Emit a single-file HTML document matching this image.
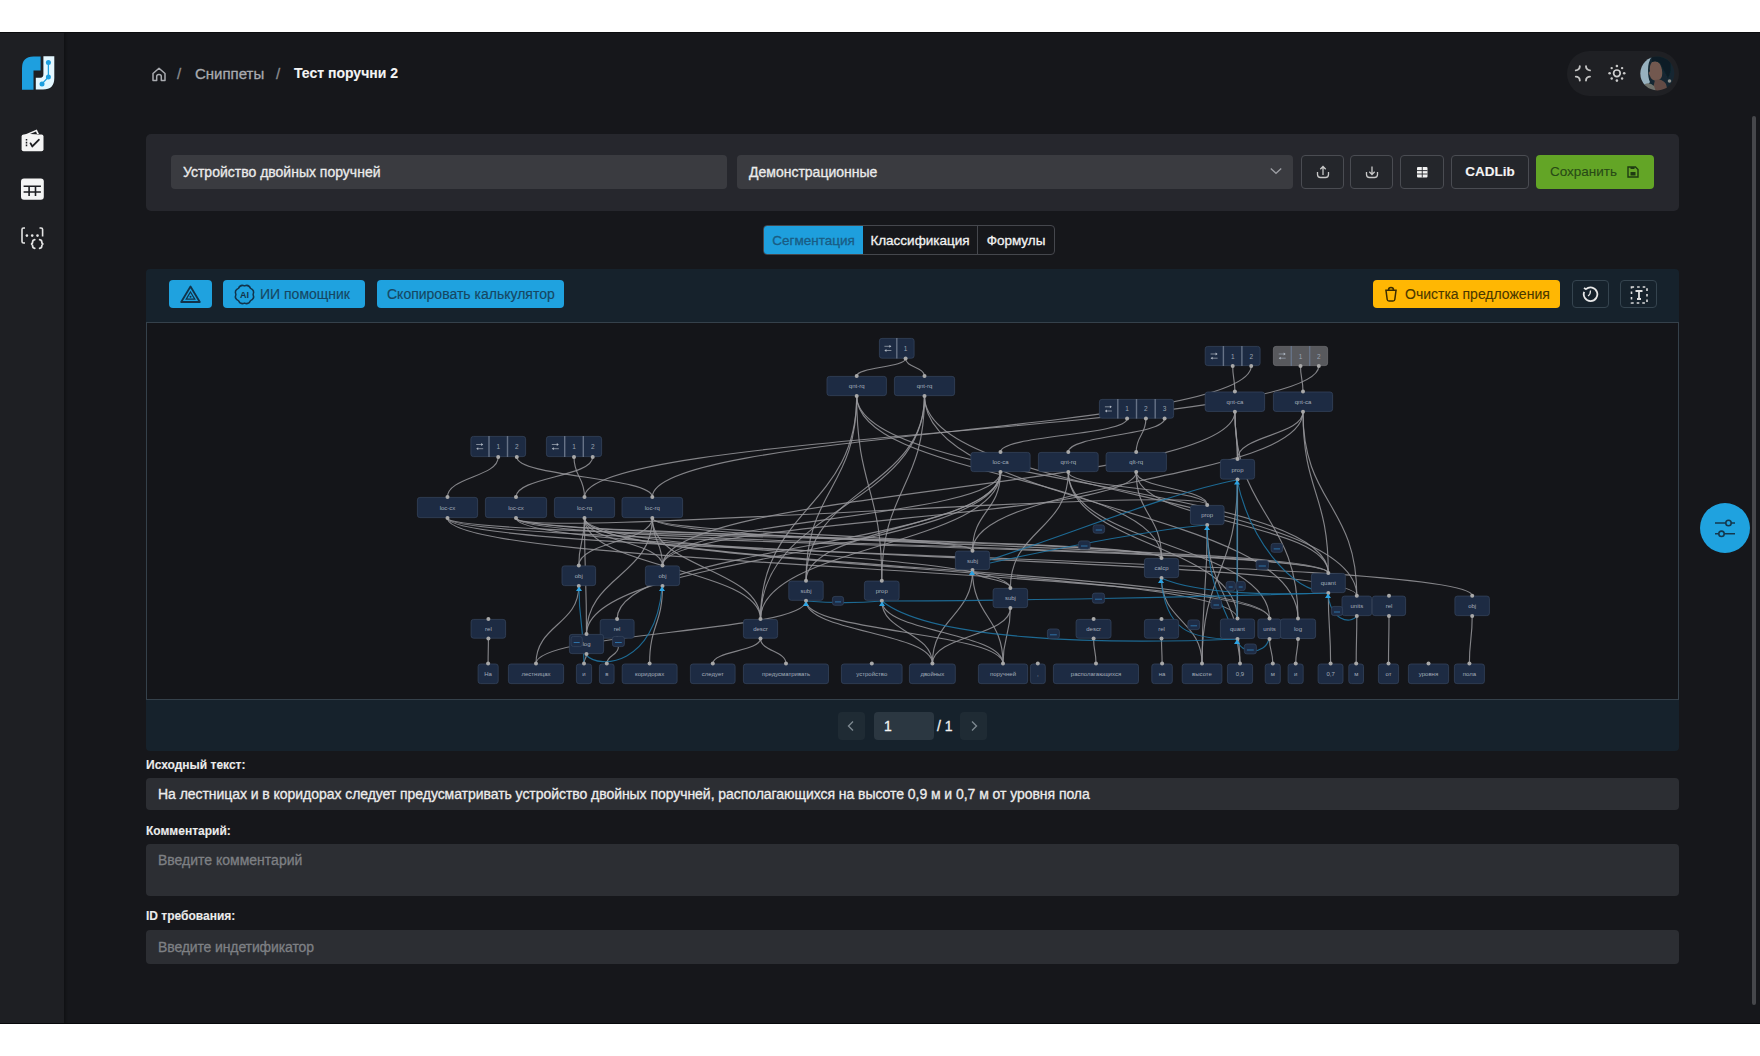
<!DOCTYPE html>
<html><head><meta charset="utf-8">
<style>
*{box-sizing:border-box;margin:0;padding:0}
html,body{width:1760px;height:1056px;overflow:hidden;background:#fff;font-family:"Liberation Sans",sans-serif;color:#e6e6e6}
.abs{position:absolute}
#app div{-webkit-text-stroke:0.3px currentColor}
#app div[style*="bold"],#app .lbl{-webkit-text-stroke:0.1px currentColor}
svg{display:block}
#app{position:absolute;left:0;top:32px;width:1760px;height:992px;background:#16171b;overflow:hidden}
#side{position:absolute;left:0;top:0;width:64px;height:992px;background:#1e1f23;box-shadow:2px 0 2px rgba(0,0,0,0.25)}
.card{position:absolute;left:146px;top:102px;width:1533px;height:77px;background:#26272d;border-radius:5px}
.inp{position:absolute;background:#3a3b40;border-radius:4px;font-size:14px;color:#ebebeb;line-height:34px;padding-left:12px}
.obtn{position:absolute;top:21px;height:34px;border:1px solid #4a4c52;border-radius:4px;background:#24262b}
.tabs{position:absolute;left:763px;top:193px;height:30px;width:292px;border:1px solid #45474d;border-radius:4px;background:#16171b;font-size:13.5px}
.tab{position:absolute;top:0;height:28px;line-height:29px;text-align:center;color:#f2f2f2}
.panel{position:absolute;left:146px;top:237px;width:1533px;height:482px;background:#16222c;border-radius:4px}
.canvas{position:absolute;left:0px;top:53px;width:1533px;height:378px;background:#141519;border:1px solid #35414b}
.bbtn{position:absolute;top:11px;height:28px;background:#1fa2df;border-radius:4px;color:#164763;font-size:14px;line-height:28px}
#app .bbtn{-webkit-text-stroke:0.15px currentColor}
.lbl{position:absolute;left:146px;font-size:12px;font-weight:bold;color:#ebebeb}
.fld{position:absolute;left:146px;width:1533px;background:#2c2e33;border-radius:4px;font-size:14px;padding-left:12px}
</style></head><body>
<div id="app">
  <div id="side">
    <!-- logo -->
    <svg class="abs" style="left:0;top:-32px" width="65" height="300" viewBox="0 0 65 300">
      <path d="M22,89.8 V68 Q22,56.4 33.5,56.4 H40.6 V70.4 H33.5 V89.8 Z" fill="#1e9fdf"/>
      <path d="M43.4,56.2 H54.3 V78 Q54.3,89.5 43,89.5 H35.8 V77.8 H40.5 Q43.4,77.8 43.4,74 Z" fill="#e4f7ff"/>
      <path d="M48.4,62.5 V77 L42,83.9" stroke="#1e9fdf" stroke-width="1.3" fill="none"/>
      <circle cx="48.4" cy="62.5" r="2.5" fill="#1e9fdf"/><circle cx="48.4" cy="77" r="2.5" fill="#1e9fdf"/><circle cx="42" cy="83.9" r="2.5" fill="#1e9fdf"/>
      <!-- icon1 -->
      <path d="M21.6,136 L36.8,129.5 L39,134 Z" fill="#f4f4f4"/>
      <rect x="21.6" y="134.6" width="21.9" height="16.6" rx="2" fill="#f4f4f4"/>
      <path d="M30,134 L36,131.5 L37,134 Z" fill="#1c1d21"/>
      <path d="M26.5,139 V147.5" stroke="#1c1d21" stroke-width="1.5" stroke-dasharray="1.6 1.2"/>
      <path d="M30.6,143.4 L32.3,146.4 L38.8,139.8" stroke="#1c1d21" stroke-width="1.9" fill="none" stroke-linecap="round" stroke-linejoin="round"/>
      <!-- icon2 -->
      <rect x="21" y="178.6" width="22.8" height="21.2" rx="3" fill="#f4f4f4"/>
      <path d="M23.6,186.3 H40.9 M23.6,192 H40.9 M29.1,186.3 V196 M35.5,186.3 V196" stroke="#1c1d21" stroke-width="1.6" fill="none"/>
      <!-- icon3 -->
      <path d="M25,228 H23.5 Q22,228 22,229.5 V241.5 Q22,243 23.5,243 H25" stroke="#e4e4e4" stroke-width="1.6" fill="none"/>
      <path d="M39.5,228 H41 Q42.6,228 42.6,229.5 V236.5" stroke="#e4e4e4" stroke-width="1.6" fill="none"/>
      <circle cx="26.9" cy="235.6" r="1.3" fill="#e4e4e4"/><circle cx="32.2" cy="235.6" r="1.3" fill="#e4e4e4"/><circle cx="37.5" cy="235.6" r="1.3" fill="#e4e4e4"/>
      <path d="M34.8,239.6 Q32.6,240 32.6,242 Q32.6,243.9 30.9,244 Q32.6,244.1 32.6,246 Q32.6,248 34.8,248.4 M39.6,239.6 Q41.8,240 41.8,242 Q41.8,243.9 43.5,244 Q41.8,244.1 41.8,246 Q41.8,248 39.6,248.4" stroke="#e4e4e4" stroke-width="1.7" fill="none" stroke-linecap="round"/>
    </svg>
  </div>
  <!-- breadcrumb -->
  <svg class="abs" style="left:150px;top:33px" width="18" height="18" viewBox="0 0 18 18">
    <path d="M3,15.5 V8.5 L9,3.2 L15,8.5 V15.5 H11.3 V11.5 Q11.3,9.6 9,9.6 Q6.7,9.6 6.7,11.5 V15.5 Z" stroke="#a9abb0" stroke-width="1.5" fill="none" stroke-linejoin="round"/>
  </svg>
  <div class="abs" style="left:177px;top:33px;font-size:15px;color:#8a8c90">/</div>
  <div class="abs" style="left:195px;top:33px;font-size:15px;color:#a9abb0">Сниппеты</div>
  <div class="abs" style="left:276px;top:33px;font-size:15px;color:#8a8c90">/</div>
  <div class="abs" style="left:294px;top:33px;font-size:14px;font-weight:bold;color:#f4f4f4">Тест поручни 2</div>

  <!-- header pill -->
  <div class="abs" style="left:1567px;top:19px;width:112px;height:45px;border-radius:23px;background:#1f2024"></div>
  <svg class="abs" style="left:1567px;top:19px" width="112" height="45" viewBox="1567 51 112 45">
    <g stroke="#c4c4c4" stroke-width="1.9" fill="none" stroke-linecap="round">
      <path d="M1575.8,70.4 A4,4 0 0 0 1579.8,66.3"/><path d="M1586,66.3 A4,4 0 0 0 1590,70.4"/>
      <path d="M1575.8,76.6 A4,4 0 0 1 1579.8,80.6"/><path d="M1586,80.6 A4,4 0 0 1 1590,76.6"/>
    </g>
    <circle cx="1616.9" cy="73.3" r="3.3" stroke="#cfcfcf" stroke-width="1.7" fill="none"/>
    <g fill="#c8c8c8">
      <circle cx="1616.9" cy="66" r="1.3"/><circle cx="1616.9" cy="80.6" r="1.3"/><circle cx="1609.6" cy="73.3" r="1.3"/><circle cx="1624.2" cy="73.3" r="1.3"/>
      <circle cx="1611.7" cy="68.1" r="1.2"/><circle cx="1622.1" cy="68.1" r="1.2"/><circle cx="1611.7" cy="78.5" r="1.2"/><circle cx="1622.1" cy="78.5" r="1.2"/>
    </g>
    <defs>
      <clipPath id="av"><circle cx="1657.3" cy="73.4" r="17"/></clipPath>
      <filter id="avb" x="-0.2" y="-0.2" width="1.4" height="1.4"><feGaussianBlur stdDeviation="0.7"/></filter>
      <radialGradient id="face" cx="0.45" cy="0.5" r="0.5"><stop offset="0" stop-color="#8a7365"/><stop offset="1" stop-color="#4a3f3a"/></radialGradient>
    </defs>
    <g clip-path="url(#av)"><g filter="url(#avb)">
      <rect x="1640" y="56" width="36" height="36" fill="#122731"/>
      <path d="M1640,92 V56 H1652 Q1648,62 1648,70 Q1648,78 1650,82 L1644,90 Z" fill="#97b1bf"/>
      <path d="M1652,62 Q1657,60 1660,64 Q1663,70 1662,76 Q1661,80 1656,81 Q1651,80 1650,76 L1648.5,73 L1650,71 Q1649,66 1652,62 Z" fill="#72584f"/>
      <path d="M1655,80 Q1662,78 1666,84 L1668,92 H1652 Z" fill="#644c45"/>
      <path d="M1640,92 L1645,84 Q1650,82 1654,86 L1656,92 Z" fill="#6f736d"/>
      <circle cx="1669.5" cy="81" r="1.8" fill="#8d8f8c"/>
      <path d="M1652,57 Q1662,55 1670,62 Q1672,70 1668,78 Q1664,70 1660,63 Q1656,60 1652,62 Z" fill="#0f1f27"/>
    </g></g>
  </svg>

  <!-- top card -->
  <div class="card">
    <div class="inp" style="left:25px;top:21px;width:556px;height:34px">Устройство двойных поручней</div>
    <div class="inp" style="left:591px;top:21px;width:556px;height:34px">Демонстрационные</div>
    <svg class="abs" style="left:1124px;top:33px" width="12" height="8" viewBox="0 0 12 8"><path d="M0.8,1.5 L6,6.3 L11.2,1.5" stroke="#9c9ea3" stroke-width="1.3" fill="none"/></svg>
    <div class="obtn" style="left:1155px;width:43px"><svg class="abs" style="left:13px;top:9px" width="16" height="14" viewBox="0 0 16 14"><path d="M2.5,7 V9.5 Q2.5,12.5 5.5,12.5 H10.5 Q13.5,12.5 13.5,9.5 V7" stroke="#c8c8c8" stroke-width="1.3" fill="none"/><path d="M8,10 V1.5 M5.3,4.2 L8,1.5 L10.7,4.2" stroke="#c8c8c8" stroke-width="1.3" fill="none"/></svg></div>
    <div class="obtn" style="left:1204px;width:43px"><svg class="abs" style="left:13px;top:9px" width="16" height="14" viewBox="0 0 16 14"><path d="M2.5,7 V9.5 Q2.5,12.5 5.5,12.5 H10.5 Q13.5,12.5 13.5,9.5 V7" stroke="#c8c8c8" stroke-width="1.3" fill="none"/><path d="M8,1.5 V9.5 M5.3,6.8 L8,9.5 L10.7,6.8" stroke="#c8c8c8" stroke-width="1.3" fill="none"/></svg></div>
    <div class="obtn" style="left:1254px;width:44px"><svg class="abs" style="left:16px;top:11px" width="11" height="11" viewBox="0 0 11 11"><rect x="0" y="0" width="10.5" height="10.5" rx="1" fill="#f2f2f2"/><path d="M0,3.6 H10.5 M0,7 H10.5 M5.25,0 V10.5" stroke="#24262b" stroke-width="0.9"/></svg></div>
    <div class="obtn" style="left:1305px;width:78px;font-weight:bold;font-size:13.5px;line-height:32px;text-align:center;color:#f4f4f4">CADLib</div>
    <div class="abs" style="left:1390px;top:21px;width:118px;height:34px;background:#63a526;border-radius:4px;color:#284a16;font-size:13.5px;line-height:34px;padding-left:14px;-webkit-text-stroke:0.1px currentColor">Сохранить</div>
    <svg class="abs" style="left:1481px;top:32px" width="12" height="12" viewBox="0 0 12 12"><path d="M1,1 H8.5 L11,3.5 V11 H1 Z" stroke="#1f3b12" stroke-width="1.4" fill="none"/><rect x="3.5" y="6" width="5" height="3.5" fill="#1f3b12"/><rect x="3.5" y="1" width="4" height="2" fill="#1f3b12"/></svg>
  </div>

  <!-- tabs -->
  <div class="tabs">
    <div class="tab" style="left:0;width:99px;background:#1e9fdd;color:#195c84;border-radius:3px 0 0 3px">Сегментация</div>
    <div class="tab" style="left:99px;width:115px;border-right:1px solid #45474d">Классификация</div>
    <div class="tab" style="left:214px;width:76px">Формулы</div>
  </div>

  <!-- graph panel -->
  <div class="panel">
    <div class="bbtn" style="left:23px;width:43px"><svg class="abs" style="left:11px;top:5px" width="21" height="19" viewBox="0 0 21 19"><path d="M10.5,1.5 L19.8,17 H1.2 Z" stroke="#12334a" stroke-width="1.8" fill="none" stroke-linejoin="round"/><path d="M10.5,7 L14.8,14.2 H6.2 Z" stroke="#12334a" stroke-width="1.2" fill="none"/><circle cx="10.5" cy="11.8" r="1" fill="#12334a"/></svg></div>
    <div class="bbtn" style="left:77px;width:142px;padding-left:37px">ИИ помощник<svg class="abs" style="left:10px;top:3px" width="23" height="23" viewBox="0 0 23 23"><path d="M20.10,11.50 Q21.85,15.79 17.58,17.58 Q15.79,21.85 11.50,20.10 Q7.21,21.85 5.42,17.58 Q1.15,15.79 2.90,11.50 Q1.15,7.21 5.42,5.42 Q7.21,1.15 11.50,2.90 Q15.79,1.15 17.58,5.42 Q21.85,7.21 20.10,11.50 Z" stroke="#12334a" stroke-width="1.5" fill="none" stroke-linejoin="round"/><text x="11.5" y="15" font-size="9" font-weight="bold" text-anchor="middle" fill="#12334a" font-family="Liberation Sans">AI</text></svg></div>
    <div class="bbtn" style="left:231px;width:187px;padding-left:10px">Скопировать калькулятор</div>
    <div class="abs" style="left:1227px;top:11px;width:187px;height:28px;background:#ffb703;border-radius:4px;color:#4a3800;font-size:14px;line-height:28px;padding-left:32px;-webkit-text-stroke:0.1px currentColor">Очистка предложения
      <svg class="abs" style="left:11px;top:6px" width="14" height="16" viewBox="0 0 14 16"><path d="M2,4.5 L3.2,13.5 Q3.4,15 5,15 H9 Q10.6,15 10.8,13.5 L12,4.5 M1.2,4.2 H12.8 M4.5,4 Q4.5,1.5 7,1.5 Q9.5,1.5 9.5,4" stroke="#3a2c00" stroke-width="1.5" fill="none"/></svg></div>
    <div class="abs" style="left:1426px;top:11px;width:37px;height:28px;border:1px solid #35444f;border-radius:4px">
      <svg class="abs" style="left:7.5px;top:4px" width="18" height="18" viewBox="0 0 18 18"><path d="M5,4.2 A6.8,6.8 0 1 1 3.2,6.8" stroke="#e8e8e8" stroke-width="1.8" fill="none"/><path d="M3,3 L5.5,4.5" stroke="#e8e8e8" stroke-width="1.8"/><path d="M9.5,5.5 Q9.5,9.5 7,11" stroke="#e8e8e8" stroke-width="1.2" fill="none"/></svg></div>
    <div class="abs" style="left:1474px;top:11px;width:37px;height:28px;border:1px solid #35444f;border-radius:4px">
      <svg class="abs" style="left:9px;top:4px" width="18" height="19" viewBox="0 0 18 19"><rect x="1.5" y="2" width="15.5" height="16" stroke="#dcdcdc" stroke-width="1.6" fill="none" stroke-dasharray="2.6 3"/><path d="M5.5,6 H12.5 M9,6 V14 M7,14 H11" stroke="#e0e0e0" stroke-width="1.8" fill="none"/></svg></div>
    <div class="canvas"></div>
    <!-- pagination -->
    <div class="abs" style="left:692px;top:443px;width:27px;height:28px;border-radius:4px;background:#1f2b34"><svg class="abs" style="left:8px;top:8px" width="10" height="12" viewBox="0 0 10 12"><path d="M7,1.5 L2.5,6 L7,10.5" stroke="#7d8890" stroke-width="1.4" fill="none"/></svg></div>
    <div class="abs" style="left:728px;top:443px;width:60px;height:28px;border-radius:4px;background:#2b3741;font-size:14px;color:#f4f4f4;line-height:28px;padding-left:10px">1</div>
    <div class="abs" style="left:791px;top:443px;font-size:14px;color:#f0f0f0;line-height:28px">/ 1</div>
    <div class="abs" style="left:814px;top:443px;width:27px;height:28px;border-radius:4px;background:#1f2b34"><svg class="abs" style="left:9px;top:8px" width="10" height="12" viewBox="0 0 10 12"><path d="M3,1.5 L7.5,6 L3,10.5" stroke="#7d8890" stroke-width="1.4" fill="none"/></svg></div>
  </div>

  <!-- bottom fields -->
  <div class="lbl" style="top:726px">Исходный текст:</div>
  <div class="fld" style="top:746px;height:32px;line-height:32px;color:#ececec;letter-spacing:-0.05px">На лестницах и в коридорах следует предусматривать устройство двойных поручней, располагающихся на высоте 0,9 м и 0,7 м от уровня пола</div>
  <div class="lbl" style="top:792px">Комментарий:</div>
  <div class="fld" style="top:812px;height:52px;padding-top:8px;color:#7e8084">Введите комментарий</div>
  <div class="lbl" style="top:877px">ID требования:</div>
  <div class="fld" style="top:898px;height:34px;line-height:34px;color:#7e8084;letter-spacing:-0.12px">Введите индетификатор</div>

<!--GRAPH--><svg width="1760" height="1056" viewBox="0 0 1760 1056" style="position:absolute;left:0;top:-32px" font-family="Liberation Sans">
<path d="M905.6,358.6 C905.6,367.3 856.7,367.3 856.7,376.0" fill="none" stroke="#96979b" stroke-width="1.15" stroke-opacity="0.85"/>
<path d="M905.6,358.6 C905.6,367.3 924.5,367.3 924.5,376.0" fill="none" stroke="#96979b" stroke-width="1.15" stroke-opacity="0.85"/>
<path d="M498.2,457.0 C498.2,477.0 447.5,477.0 447.5,497.0" fill="none" stroke="#96979b" stroke-width="1.15" stroke-opacity="0.85"/>
<path d="M516.8,457.0 C516.8,477.0 652.3,477.0 652.3,497.0" fill="none" stroke="#96979b" stroke-width="1.15" stroke-opacity="0.85"/>
<path d="M574.0,457.0 C574.0,477.0 584.5,477.0 584.5,497.0" fill="none" stroke="#96979b" stroke-width="1.15" stroke-opacity="0.85"/>
<path d="M592.7,457.0 C592.7,477.0 516.0,477.0 516.0,497.0" fill="none" stroke="#96979b" stroke-width="1.15" stroke-opacity="0.85"/>
<path d="M1127.1,418.6 C1127.1,435.3 1000.5,435.3 1000.5,452.0" fill="none" stroke="#96979b" stroke-width="1.15" stroke-opacity="0.85"/>
<path d="M1145.9,418.6 C1145.9,435.3 1136.2,435.3 1136.2,452.0" fill="none" stroke="#96979b" stroke-width="1.15" stroke-opacity="0.85"/>
<path d="M1164.6,418.6 C1164.6,435.3 1068.3,435.3 1068.3,452.0" fill="none" stroke="#96979b" stroke-width="1.15" stroke-opacity="0.85"/>
<path d="M1232.7,366.0 C1232.7,378.8 1234.9,378.8 1234.9,391.6" fill="none" stroke="#96979b" stroke-width="1.15" stroke-opacity="0.85"/>
<path d="M1251.2,366.0 C1251.2,431.5 652.3,431.5 652.3,497.0" fill="none" stroke="#96979b" stroke-width="1.15" stroke-opacity="0.85"/>
<path d="M1300.5,366.0 C1300.5,378.8 1303.0,378.8 1303.0,391.6" fill="none" stroke="#96979b" stroke-width="1.15" stroke-opacity="0.85"/>
<path d="M1318.8,366.0 C1318.8,431.5 584.5,431.5 584.5,497.0" fill="none" stroke="#96979b" stroke-width="1.15" stroke-opacity="0.85"/>
<path d="M447.5,518.0 C447.5,538.0 1161.5,538.0 1161.5,558.0" fill="none" stroke="#96979b" stroke-width="1.15" stroke-opacity="0.85"/>
<path d="M447.5,518.0 C447.5,545.5 1328.3,545.5 1328.3,573.0" fill="none" stroke="#96979b" stroke-width="1.15" stroke-opacity="0.85"/>
<path d="M447.5,518.0 C447.5,556.9 1472.2,556.9 1472.2,595.7" fill="none" stroke="#96979b" stroke-width="1.15" stroke-opacity="0.85"/>
<path d="M447.5,518.0 C447.5,568.3 1269.5,568.3 1269.5,618.6" fill="none" stroke="#96979b" stroke-width="1.15" stroke-opacity="0.85"/>
<path d="M516.0,518.0 C516.0,534.4 972.5,534.4 972.5,550.7" fill="none" stroke="#96979b" stroke-width="1.15" stroke-opacity="0.85"/>
<path d="M516.0,518.0 C516.0,538.0 1161.5,538.0 1161.5,558.0" fill="none" stroke="#96979b" stroke-width="1.15" stroke-opacity="0.85"/>
<path d="M516.0,518.0 C516.0,545.5 1328.3,545.5 1328.3,573.0" fill="none" stroke="#96979b" stroke-width="1.15" stroke-opacity="0.85"/>
<path d="M516.0,518.0 C516.0,556.9 1356.8,556.9 1356.8,595.7" fill="none" stroke="#96979b" stroke-width="1.15" stroke-opacity="0.85"/>
<path d="M516.0,518.0 C516.0,540.5 1207.2,482.5 1207.2,505.0" fill="none" stroke="#96979b" stroke-width="1.15" stroke-opacity="0.85"/>
<path d="M584.5,518.0 C584.5,541.8 578.8,541.8 578.8,565.5" fill="none" stroke="#96979b" stroke-width="1.15" stroke-opacity="0.85"/>
<path d="M584.5,518.0 C584.5,576.0 586.5,576.0 586.5,634.0" fill="none" stroke="#96979b" stroke-width="1.15" stroke-opacity="0.85"/>
<path d="M584.5,518.0 C584.5,553.0 1010.4,553.0 1010.4,588.0" fill="none" stroke="#96979b" stroke-width="1.15" stroke-opacity="0.85"/>
<path d="M584.5,518.0 C584.5,568.3 1237.5,568.3 1237.5,618.6" fill="none" stroke="#96979b" stroke-width="1.15" stroke-opacity="0.85"/>
<path d="M584.5,518.0 C584.5,568.3 1269.5,568.3 1269.5,618.6" fill="none" stroke="#96979b" stroke-width="1.15" stroke-opacity="0.85"/>
<path d="M584.5,518.0 C584.5,541.8 662.5,541.8 662.5,565.5" fill="none" stroke="#96979b" stroke-width="1.15" stroke-opacity="0.85"/>
<path d="M584.5,518.0 C584.5,568.5 760.5,568.5 760.5,619.0" fill="none" stroke="#96979b" stroke-width="1.15" stroke-opacity="0.85"/>
<path d="M652.3,518.0 C652.3,541.8 662.5,541.8 662.5,565.5" fill="none" stroke="#96979b" stroke-width="1.15" stroke-opacity="0.85"/>
<path d="M652.3,518.0 C652.3,576.0 586.5,576.0 586.5,634.0" fill="none" stroke="#96979b" stroke-width="1.15" stroke-opacity="0.85"/>
<path d="M652.3,518.0 C652.3,541.8 578.8,541.8 578.8,565.5" fill="none" stroke="#96979b" stroke-width="1.15" stroke-opacity="0.85"/>
<path d="M652.3,518.0 C652.3,534.4 972.5,534.4 972.5,550.7" fill="none" stroke="#96979b" stroke-width="1.15" stroke-opacity="0.85"/>
<path d="M652.3,518.0 C652.3,545.5 1328.3,545.5 1328.3,573.0" fill="none" stroke="#96979b" stroke-width="1.15" stroke-opacity="0.85"/>
<path d="M652.3,518.0 C652.3,568.5 760.5,568.5 760.5,619.0" fill="none" stroke="#96979b" stroke-width="1.15" stroke-opacity="0.85"/>
<path d="M856.7,396.0 C856.7,488.4 806.0,488.4 806.0,580.7" fill="none" stroke="#96979b" stroke-width="1.15" stroke-opacity="0.85"/>
<path d="M856.7,396.0 C856.7,488.4 881.8,488.4 881.8,580.7" fill="none" stroke="#96979b" stroke-width="1.15" stroke-opacity="0.85"/>
<path d="M856.7,396.0 C856.7,507.5 760.5,507.5 760.5,619.0" fill="none" stroke="#96979b" stroke-width="1.15" stroke-opacity="0.85"/>
<path d="M856.7,396.0 C856.7,477.0 1161.5,477.0 1161.5,558.0" fill="none" stroke="#96979b" stroke-width="1.15" stroke-opacity="0.85"/>
<path d="M856.7,396.0 C856.7,484.5 1328.3,484.5 1328.3,573.0" fill="none" stroke="#96979b" stroke-width="1.15" stroke-opacity="0.85"/>
<path d="M924.5,396.0 C924.5,488.4 881.8,488.4 881.8,580.7" fill="none" stroke="#96979b" stroke-width="1.15" stroke-opacity="0.85"/>
<path d="M924.5,396.0 C924.5,507.5 760.5,507.5 760.5,619.0" fill="none" stroke="#96979b" stroke-width="1.15" stroke-opacity="0.85"/>
<path d="M924.5,396.0 C924.5,488.4 806.0,488.4 806.0,580.7" fill="none" stroke="#96979b" stroke-width="1.15" stroke-opacity="0.85"/>
<path d="M924.5,396.0 C924.5,507.3 1298.0,507.3 1298.0,618.6" fill="none" stroke="#96979b" stroke-width="1.15" stroke-opacity="0.85"/>
<path d="M924.5,396.0 C924.5,495.9 1356.8,495.9 1356.8,595.7" fill="none" stroke="#96979b" stroke-width="1.15" stroke-opacity="0.85"/>
<path d="M1000.5,472.0 C1000.5,526.4 806.0,526.4 806.0,580.7" fill="none" stroke="#96979b" stroke-width="1.15" stroke-opacity="0.85"/>
<path d="M1000.5,472.0 C1000.5,545.5 760.5,545.5 760.5,619.0" fill="none" stroke="#96979b" stroke-width="1.15" stroke-opacity="0.85"/>
<path d="M1000.5,472.0 C1000.5,511.4 972.5,511.4 972.5,550.7" fill="none" stroke="#96979b" stroke-width="1.15" stroke-opacity="0.85"/>
<path d="M1000.5,472.0 C1000.5,518.8 662.5,518.8 662.5,565.5" fill="none" stroke="#96979b" stroke-width="1.15" stroke-opacity="0.85"/>
<path d="M1000.5,472.0 C1000.5,553.0 586.5,553.0 586.5,634.0" fill="none" stroke="#96979b" stroke-width="1.15" stroke-opacity="0.85"/>
<path d="M1000.5,472.0 C1000.5,545.5 617.1,545.5 617.1,619.0" fill="none" stroke="#96979b" stroke-width="1.15" stroke-opacity="0.85"/>
<path d="M1068.3,472.0 C1068.3,530.0 1010.4,530.0 1010.4,588.0" fill="none" stroke="#96979b" stroke-width="1.15" stroke-opacity="0.85"/>
<path d="M1068.3,472.0 C1068.3,488.5 1207.2,488.5 1207.2,505.0" fill="none" stroke="#96979b" stroke-width="1.15" stroke-opacity="0.85"/>
<path d="M1068.3,472.0 C1068.3,545.3 1237.5,545.3 1237.5,618.6" fill="none" stroke="#96979b" stroke-width="1.15" stroke-opacity="0.85"/>
<path d="M1068.3,472.0 C1068.3,545.3 1269.5,545.3 1269.5,618.6" fill="none" stroke="#96979b" stroke-width="1.15" stroke-opacity="0.85"/>
<path d="M1136.2,472.0 C1136.2,488.5 1207.2,488.5 1207.2,505.0" fill="none" stroke="#96979b" stroke-width="1.15" stroke-opacity="0.85"/>
<path d="M1136.2,472.0 C1136.2,515.0 1161.5,515.0 1161.5,558.0" fill="none" stroke="#96979b" stroke-width="1.15" stroke-opacity="0.85"/>
<path d="M1136.2,472.0 C1136.2,518.8 662.5,518.8 662.5,565.5" fill="none" stroke="#96979b" stroke-width="1.15" stroke-opacity="0.85"/>
<path d="M1136.2,472.0 C1136.2,522.5 1328.3,522.5 1328.3,573.0" fill="none" stroke="#96979b" stroke-width="1.15" stroke-opacity="0.85"/>
<path d="M1234.9,411.8 C1234.9,435.4 1237.5,435.4 1237.5,459.0" fill="none" stroke="#96979b" stroke-width="1.15" stroke-opacity="0.85"/>
<path d="M1234.9,411.8 C1234.9,488.6 662.5,488.6 662.5,565.5" fill="none" stroke="#96979b" stroke-width="1.15" stroke-opacity="0.85"/>
<path d="M1234.9,411.8 C1234.9,515.2 1298.0,515.2 1298.0,618.6" fill="none" stroke="#96979b" stroke-width="1.15" stroke-opacity="0.85"/>
<path d="M1234.9,411.8 C1234.9,435.4 1237.5,435.4 1237.5,459.0" fill="none" stroke="#96979b" stroke-width="1.15" stroke-opacity="0.85"/>
<path d="M1303.0,411.8 C1303.0,435.4 1237.5,435.4 1237.5,459.0" fill="none" stroke="#96979b" stroke-width="1.15" stroke-opacity="0.85"/>
<path d="M1303.0,411.8 C1303.0,492.4 1328.3,492.4 1328.3,573.0" fill="none" stroke="#96979b" stroke-width="1.15" stroke-opacity="0.85"/>
<path d="M1303.0,411.8 C1303.0,503.8 1356.8,503.8 1356.8,595.7" fill="none" stroke="#96979b" stroke-width="1.15" stroke-opacity="0.85"/>
<path d="M1303.0,411.8 C1303.0,481.2 972.5,481.2 972.5,550.7" fill="none" stroke="#96979b" stroke-width="1.15" stroke-opacity="0.85"/>
<path d="M1237.5,479.5 C1237.5,549.0 1237.5,549.0 1237.5,618.6" fill="none" stroke="#96979b" stroke-width="1.15" stroke-opacity="0.85"/>
<path d="M1237.5,479.5 C1237.5,571.5 1202.0,571.5 1202.0,663.6" fill="none" stroke="#96979b" stroke-width="1.15" stroke-opacity="0.85"/>
<path d="M1207.2,525.0 C1207.2,594.3 1202.0,594.3 1202.0,663.6" fill="none" stroke="#96979b" stroke-width="1.15" stroke-opacity="0.85"/>
<path d="M1207.2,525.0 C1207.2,594.3 1240.0,594.3 1240.0,663.6" fill="none" stroke="#96979b" stroke-width="1.15" stroke-opacity="0.85"/>
<path d="M972.5,570.0 C972.5,579.0 1010.4,579.0 1010.4,588.0" fill="none" stroke="#96979b" stroke-width="1.15" stroke-opacity="0.85"/>
<path d="M972.5,570.0 C972.5,616.8 1003.0,616.8 1003.0,663.6" fill="none" stroke="#96979b" stroke-width="1.15" stroke-opacity="0.85"/>
<path d="M972.5,570.0 C972.5,616.8 932.4,616.8 932.4,663.6" fill="none" stroke="#96979b" stroke-width="1.15" stroke-opacity="0.85"/>
<path d="M806.0,600.7 C806.0,632.2 932.4,632.2 932.4,663.6" fill="none" stroke="#96979b" stroke-width="1.15" stroke-opacity="0.85"/>
<path d="M806.0,600.7 C806.0,632.2 536.0,632.2 536.0,663.6" fill="none" stroke="#96979b" stroke-width="1.15" stroke-opacity="0.85"/>
<path d="M806.0,600.7 C806.0,632.2 1003.0,632.2 1003.0,663.6" fill="none" stroke="#96979b" stroke-width="1.15" stroke-opacity="0.85"/>
<path d="M881.8,600.7 C881.8,632.2 932.4,632.2 932.4,663.6" fill="none" stroke="#96979b" stroke-width="1.15" stroke-opacity="0.85"/>
<path d="M881.8,600.7 C881.8,632.2 1003.0,632.2 1003.0,663.6" fill="none" stroke="#96979b" stroke-width="1.15" stroke-opacity="0.85"/>
<path d="M1010.4,608.0 C1010.4,635.8 1003.0,635.8 1003.0,663.6" fill="none" stroke="#96979b" stroke-width="1.15" stroke-opacity="0.85"/>
<path d="M1010.4,608.0 C1010.4,635.8 932.4,635.8 932.4,663.6" fill="none" stroke="#96979b" stroke-width="1.15" stroke-opacity="0.85"/>
<path d="M760.5,638.6 C760.5,651.1 712.8,651.1 712.8,663.6" fill="none" stroke="#96979b" stroke-width="1.15" stroke-opacity="0.85"/>
<path d="M760.5,638.6 C760.5,651.1 786.0,651.1 786.0,663.6" fill="none" stroke="#96979b" stroke-width="1.15" stroke-opacity="0.85"/>
<path d="M1093.6,638.6 C1093.6,651.1 1096.0,651.1 1096.0,663.6" fill="none" stroke="#96979b" stroke-width="1.15" stroke-opacity="0.85"/>
<path d="M1161.5,638.6 C1161.5,651.1 1162.1,651.1 1162.1,663.6" fill="none" stroke="#96979b" stroke-width="1.15" stroke-opacity="0.85"/>
<path d="M1161.5,578.0 C1161.5,620.8 1202.0,620.8 1202.0,663.6" fill="none" stroke="#96979b" stroke-width="1.15" stroke-opacity="0.85"/>
<path d="M1328.3,593.0 C1328.3,628.3 1330.6,628.3 1330.6,663.6" fill="none" stroke="#96979b" stroke-width="1.15" stroke-opacity="0.85"/>
<path d="M1237.5,638.9 C1237.5,651.2 1240.0,651.2 1240.0,663.6" fill="none" stroke="#96979b" stroke-width="1.15" stroke-opacity="0.85"/>
<path d="M1356.8,616.0 C1356.8,639.8 1356.2,639.8 1356.2,663.6" fill="none" stroke="#96979b" stroke-width="1.15" stroke-opacity="0.85"/>
<path d="M1269.5,638.9 C1269.5,651.2 1272.8,651.2 1272.8,663.6" fill="none" stroke="#96979b" stroke-width="1.15" stroke-opacity="0.85"/>
<path d="M1298.0,638.9 C1298.0,651.2 1295.7,651.2 1295.7,663.6" fill="none" stroke="#96979b" stroke-width="1.15" stroke-opacity="0.85"/>
<path d="M1389.0,616.0 C1389.0,639.8 1388.5,639.8 1388.5,663.6" fill="none" stroke="#96979b" stroke-width="1.15" stroke-opacity="0.85"/>
<path d="M1472.2,616.0 C1472.2,639.8 1469.4,639.8 1469.4,663.6" fill="none" stroke="#96979b" stroke-width="1.15" stroke-opacity="0.85"/>
<path d="M488.4,638.6 C488.4,651.1 488.1,651.1 488.1,663.6" fill="none" stroke="#96979b" stroke-width="1.15" stroke-opacity="0.85"/>
<path d="M578.8,586.0 C578.8,624.8 536.0,624.8 536.0,663.6" fill="none" stroke="#96979b" stroke-width="1.15" stroke-opacity="0.85"/>
<path d="M662.5,586.0 C662.5,624.8 649.6,624.8 649.6,663.6" fill="none" stroke="#96979b" stroke-width="1.15" stroke-opacity="0.85"/>
<path d="M586.5,654.0 C586.5,658.8 584.0,658.8 584.0,663.6" fill="none" stroke="#96979b" stroke-width="1.15" stroke-opacity="0.85"/>
<path d="M618.4,647.0 C618.4,655.3 606.8,655.3 606.8,663.6" fill="none" stroke="#96979b" stroke-width="1.15" stroke-opacity="0.85"/>
<path d="M579,588 C579,625 584,625 584,664" fill="none" stroke="#1e78a8" stroke-width="1.15" stroke-opacity="0.85"/>
<path d="M586,655 C600,670 655,665 662,588" fill="none" stroke="#1e78a8" stroke-width="1.15" stroke-opacity="0.85"/>
<path d="M806,601 C830,603 860,603 882,601" fill="none" stroke="#1e78a8" stroke-width="1.15" stroke-opacity="0.85"/>
<path d="M882,601 C1000,601 1200,597 1328,593" fill="none" stroke="#1e78a8" stroke-width="1.15" stroke-opacity="0.85"/>
<path d="M882,601 C930,640 1100,645 1237,639" fill="none" stroke="#1e78a8" stroke-width="1.15" stroke-opacity="0.85"/>
<path d="M990,563 C1050,550 1150,530 1207,525" fill="none" stroke="#1e78a8" stroke-width="1.15" stroke-opacity="0.85"/>
<path d="M990,560 C1080,530 1180,490 1237,480" fill="none" stroke="#1e78a8" stroke-width="1.15" stroke-opacity="0.85"/>
<path d="M1237,480 L1237,619" fill="none" stroke="#1e78a8" stroke-width="1.15" stroke-opacity="0.85"/>
<path d="M1207,525 C1207,580 1220,600 1237,639" fill="none" stroke="#1e78a8" stroke-width="1.15" stroke-opacity="0.85"/>
<path d="M1161,578 C1165,630 1190,640 1237,639" fill="none" stroke="#1e78a8" stroke-width="1.15" stroke-opacity="0.85"/>
<path d="M1161,578 C1200,595 1280,595 1328,593" fill="none" stroke="#1e78a8" stroke-width="1.15" stroke-opacity="0.85"/>
<path d="M1237,480 C1250,540 1290,590 1328,593" fill="none" stroke="#1e78a8" stroke-width="1.15" stroke-opacity="0.85"/>
<path d="M1328,593 C1330,620 1350,625 1357,616" fill="none" stroke="#1e78a8" stroke-width="1.15" stroke-opacity="0.85"/>
<path d="M1237,639 C1240,655 1265,655 1269,639" fill="none" stroke="#1e78a8" stroke-width="1.15" stroke-opacity="0.85"/>
<rect x="879.4" y="338.4" width="34.7" height="19.8" rx="2.5" fill="#1d2b43" stroke="#33425b" stroke-width="0.8"/>
<line x1="896.8" y1="338.0" x2="896.8" y2="358.6" stroke="#667286" stroke-width="1.4"/>
<text x="905.6" y="350.8" font-size="6.5" fill="#9aa3b0" text-anchor="middle">1</text>
<path d="M884.4,346.3 h6 M891.4,350.5 h-6" stroke="#8c95a2" stroke-width="0.9"/><path d="M891.4,346.3 l-2,-1.4 v2.8 z M884.4,350.5 l2,-1.4 v2.8 z" fill="#b0b8c4"/>
<circle cx="905.6" cy="358.6" r="2" fill="#a8a8a8"/>
<rect x="470.9" y="436.4" width="54.7" height="20.2" rx="2.5" fill="#1d2b43" stroke="#33425b" stroke-width="0.8"/>
<line x1="489.0" y1="436.0" x2="489.0" y2="457.0" stroke="#667286" stroke-width="1.4"/>
<line x1="507.5" y1="436.0" x2="507.5" y2="457.0" stroke="#667286" stroke-width="1.4"/>
<text x="498.2" y="449.0" font-size="6.5" fill="#9aa3b0" text-anchor="middle">1</text>
<text x="516.8" y="449.0" font-size="6.5" fill="#9aa3b0" text-anchor="middle">2</text>
<path d="M476.2,444.5 h6 M483.2,448.7 h-6" stroke="#8c95a2" stroke-width="0.9"/><path d="M483.2,444.5 l-2,-1.4 v2.8 z M476.2,448.7 l2,-1.4 v2.8 z" fill="#b0b8c4"/>
<circle cx="498.2" cy="457.0" r="2" fill="#a8a8a8"/>
<circle cx="516.8" cy="457.0" r="2" fill="#a8a8a8"/>
<rect x="546.4" y="436.4" width="55.2" height="20.2" rx="2.5" fill="#1d2b43" stroke="#33425b" stroke-width="0.8"/>
<line x1="564.7" y1="436.0" x2="564.7" y2="457.0" stroke="#667286" stroke-width="1.4"/>
<line x1="583.3" y1="436.0" x2="583.3" y2="457.0" stroke="#667286" stroke-width="1.4"/>
<text x="574.0" y="449.0" font-size="6.5" fill="#9aa3b0" text-anchor="middle">1</text>
<text x="592.7" y="449.0" font-size="6.5" fill="#9aa3b0" text-anchor="middle">2</text>
<path d="M551.8,444.5 h6 M558.8,448.7 h-6" stroke="#8c95a2" stroke-width="0.9"/><path d="M558.8,444.5 l-2,-1.4 v2.8 z M551.8,448.7 l2,-1.4 v2.8 z" fill="#b0b8c4"/>
<circle cx="574.0" cy="457.0" r="2" fill="#a8a8a8"/>
<circle cx="592.7" cy="457.0" r="2" fill="#a8a8a8"/>
<rect x="1099.4" y="399.4" width="74.2" height="18.8" rx="2.5" fill="#1d2b43" stroke="#33425b" stroke-width="0.8"/>
<line x1="1117.8" y1="399.0" x2="1117.8" y2="418.6" stroke="#667286" stroke-width="1.4"/>
<line x1="1136.5" y1="399.0" x2="1136.5" y2="418.6" stroke="#667286" stroke-width="1.4"/>
<line x1="1155.2" y1="399.0" x2="1155.2" y2="418.6" stroke="#667286" stroke-width="1.4"/>
<text x="1127.1" y="411.3" font-size="6.5" fill="#9aa3b0" text-anchor="middle">1</text>
<text x="1145.9" y="411.3" font-size="6.5" fill="#9aa3b0" text-anchor="middle">2</text>
<text x="1164.6" y="411.3" font-size="6.5" fill="#9aa3b0" text-anchor="middle">3</text>
<path d="M1104.9,406.8 h6 M1111.9,411.0 h-6" stroke="#8c95a2" stroke-width="0.9"/><path d="M1111.9,406.8 l-2,-1.4 v2.8 z M1104.9,411.0 l2,-1.4 v2.8 z" fill="#b0b8c4"/>
<circle cx="1127.1" cy="418.6" r="2" fill="#a8a8a8"/>
<circle cx="1145.9" cy="418.6" r="2" fill="#a8a8a8"/>
<circle cx="1164.6" cy="418.6" r="2" fill="#a8a8a8"/>
<rect x="1205.2" y="346.4" width="54.9" height="19.2" rx="2.5" fill="#1d2b43" stroke="#33425b" stroke-width="0.8"/>
<line x1="1223.4" y1="346.0" x2="1223.4" y2="366.0" stroke="#667286" stroke-width="1.4"/>
<line x1="1241.9" y1="346.0" x2="1241.9" y2="366.0" stroke="#667286" stroke-width="1.4"/>
<text x="1232.7" y="358.5" font-size="6.5" fill="#9aa3b0" text-anchor="middle">1</text>
<text x="1251.2" y="358.5" font-size="6.5" fill="#9aa3b0" text-anchor="middle">2</text>
<path d="M1210.6,354.0 h6 M1217.6,358.2 h-6" stroke="#8c95a2" stroke-width="0.9"/><path d="M1217.6,354.0 l-2,-1.4 v2.8 z M1210.6,358.2 l2,-1.4 v2.8 z" fill="#b0b8c4"/>
<circle cx="1232.7" cy="366.0" r="2" fill="#a8a8a8"/>
<circle cx="1251.2" cy="366.0" r="2" fill="#a8a8a8"/>
<rect x="1273.4" y="346.4" width="54.2" height="19.2" rx="2.5" fill="#58595d" stroke="#6b6c70" stroke-width="0.8"/>
<line x1="1291.3" y1="346.0" x2="1291.3" y2="366.0" stroke="#667286" stroke-width="1.4"/>
<line x1="1309.7" y1="346.0" x2="1309.7" y2="366.0" stroke="#667286" stroke-width="1.4"/>
<text x="1300.5" y="358.5" font-size="6.5" fill="#9aa3b0" text-anchor="middle">1</text>
<text x="1318.8" y="358.5" font-size="6.5" fill="#9aa3b0" text-anchor="middle">2</text>
<path d="M1278.7,354.0 h6 M1285.7,358.2 h-6" stroke="#8c95a2" stroke-width="0.9"/><path d="M1285.7,354.0 l-2,-1.4 v2.8 z M1278.7,358.2 l2,-1.4 v2.8 z" fill="#b0b8c4"/>
<circle cx="1300.5" cy="366.0" r="2" fill="#a8a8a8"/>
<circle cx="1318.8" cy="366.0" r="2" fill="#a8a8a8"/>
<rect x="827.0" y="376.4" width="59.4" height="19.2" rx="2.5" fill="#1d2b43" stroke="#33425b" stroke-width="0.8"/>
<text x="856.7" y="388.3" font-size="6" fill="#a3acba" text-anchor="middle">qnt-rq</text>
<circle cx="856.7" cy="376.0" r="2" fill="#a8a8a8"/>
<circle cx="856.7" cy="396.0" r="2" fill="#a8a8a8"/>
<rect x="894.4" y="376.4" width="60.2" height="19.2" rx="2.5" fill="#1d2b43" stroke="#33425b" stroke-width="0.8"/>
<text x="924.5" y="388.3" font-size="6" fill="#a3acba" text-anchor="middle">qnt-rq</text>
<circle cx="924.5" cy="376.0" r="2" fill="#a8a8a8"/>
<circle cx="924.5" cy="396.0" r="2" fill="#a8a8a8"/>
<rect x="1205.2" y="392.0" width="59.4" height="19.4" rx="2.5" fill="#1d2b43" stroke="#33425b" stroke-width="0.8"/>
<text x="1234.9" y="404.0" font-size="6" fill="#a3acba" text-anchor="middle">qnt-ca</text>
<circle cx="1234.9" cy="391.6" r="2" fill="#a8a8a8"/>
<circle cx="1234.9" cy="411.8" r="2" fill="#a8a8a8"/>
<rect x="1273.4" y="392.0" width="59.2" height="19.4" rx="2.5" fill="#1d2b43" stroke="#33425b" stroke-width="0.8"/>
<text x="1303.0" y="404.0" font-size="6" fill="#a3acba" text-anchor="middle">qnt-ca</text>
<circle cx="1303.0" cy="391.6" r="2" fill="#a8a8a8"/>
<circle cx="1303.0" cy="411.8" r="2" fill="#a8a8a8"/>
<rect x="970.9" y="452.4" width="59.2" height="19.2" rx="2.5" fill="#1d2b43" stroke="#33425b" stroke-width="0.8"/>
<text x="1000.5" y="464.3" font-size="6" fill="#a3acba" text-anchor="middle">loc-ca</text>
<circle cx="1000.5" cy="452.0" r="2" fill="#a8a8a8"/>
<circle cx="1000.5" cy="472.0" r="2" fill="#a8a8a8"/>
<rect x="1038.4" y="452.4" width="59.8" height="19.2" rx="2.5" fill="#1d2b43" stroke="#33425b" stroke-width="0.8"/>
<text x="1068.3" y="464.3" font-size="6" fill="#a3acba" text-anchor="middle">qnt-rq</text>
<circle cx="1068.3" cy="452.0" r="2" fill="#a8a8a8"/>
<circle cx="1068.3" cy="472.0" r="2" fill="#a8a8a8"/>
<rect x="1106.1" y="452.4" width="60.3" height="19.2" rx="2.5" fill="#1d2b43" stroke="#33425b" stroke-width="0.8"/>
<text x="1136.2" y="464.3" font-size="6" fill="#a3acba" text-anchor="middle">qlt-rq</text>
<circle cx="1136.2" cy="452.0" r="2" fill="#a8a8a8"/>
<circle cx="1136.2" cy="472.0" r="2" fill="#a8a8a8"/>
<rect x="1220.4" y="459.4" width="34.2" height="19.7" rx="2.5" fill="#1d2b43" stroke="#33425b" stroke-width="0.8"/>
<text x="1237.5" y="471.6" font-size="6" fill="#a3acba" text-anchor="middle">prop</text>
<circle cx="1237.5" cy="459.0" r="2" fill="#a8a8a8"/>
<circle cx="1237.5" cy="479.5" r="2" fill="#a8a8a8"/>
<rect x="417.4" y="497.4" width="60.2" height="20.2" rx="2.5" fill="#1d2b43" stroke="#33425b" stroke-width="0.8"/>
<text x="447.5" y="509.8" font-size="6" fill="#a3acba" text-anchor="middle">loc-cx</text>
<circle cx="447.5" cy="497.0" r="2" fill="#a8a8a8"/>
<circle cx="447.5" cy="518.0" r="2" fill="#a8a8a8"/>
<rect x="485.4" y="497.4" width="61.2" height="20.2" rx="2.5" fill="#1d2b43" stroke="#33425b" stroke-width="0.8"/>
<text x="516.0" y="509.8" font-size="6" fill="#a3acba" text-anchor="middle">loc-cx</text>
<circle cx="516.0" cy="497.0" r="2" fill="#a8a8a8"/>
<circle cx="516.0" cy="518.0" r="2" fill="#a8a8a8"/>
<rect x="554.4" y="497.4" width="60.2" height="20.2" rx="2.5" fill="#1d2b43" stroke="#33425b" stroke-width="0.8"/>
<text x="584.5" y="509.8" font-size="6" fill="#a3acba" text-anchor="middle">loc-rq</text>
<circle cx="584.5" cy="497.0" r="2" fill="#a8a8a8"/>
<circle cx="584.5" cy="518.0" r="2" fill="#a8a8a8"/>
<rect x="622.0" y="497.4" width="60.6" height="20.2" rx="2.5" fill="#1d2b43" stroke="#33425b" stroke-width="0.8"/>
<text x="652.3" y="509.8" font-size="6" fill="#a3acba" text-anchor="middle">loc-rq</text>
<circle cx="652.3" cy="497.0" r="2" fill="#a8a8a8"/>
<circle cx="652.3" cy="518.0" r="2" fill="#a8a8a8"/>
<rect x="1190.4" y="505.4" width="33.7" height="19.2" rx="2.5" fill="#1d2b43" stroke="#33425b" stroke-width="0.8"/>
<text x="1207.2" y="517.3" font-size="6" fill="#a3acba" text-anchor="middle">prop</text>
<circle cx="1207.2" cy="505.0" r="2" fill="#a8a8a8"/>
<circle cx="1207.2" cy="525.0" r="2" fill="#a8a8a8"/>
<rect x="955.4" y="551.1" width="34.2" height="18.5" rx="2.5" fill="#1d2b43" stroke="#33425b" stroke-width="0.8"/>
<text x="972.5" y="562.6" font-size="6" fill="#a3acba" text-anchor="middle">subj</text>
<circle cx="972.5" cy="550.7" r="2" fill="#a8a8a8"/>
<circle cx="972.5" cy="570.0" r="2" fill="#a8a8a8"/>
<rect x="1144.4" y="558.4" width="34.2" height="19.2" rx="2.5" fill="#1d2b43" stroke="#33425b" stroke-width="0.8"/>
<text x="1161.5" y="570.3" font-size="6" fill="#a3acba" text-anchor="middle">calcp</text>
<circle cx="1161.5" cy="558.0" r="2" fill="#a8a8a8"/>
<circle cx="1161.5" cy="578.0" r="2" fill="#a8a8a8"/>
<rect x="562.0" y="565.9" width="33.6" height="19.7" rx="2.5" fill="#1d2b43" stroke="#33425b" stroke-width="0.8"/>
<text x="578.8" y="578.0" font-size="6" fill="#a3acba" text-anchor="middle">obj</text>
<circle cx="578.8" cy="565.5" r="2" fill="#a8a8a8"/>
<circle cx="578.8" cy="586.0" r="2" fill="#a8a8a8"/>
<rect x="645.4" y="565.9" width="34.2" height="19.7" rx="2.5" fill="#1d2b43" stroke="#33425b" stroke-width="0.8"/>
<text x="662.5" y="578.0" font-size="6" fill="#a3acba" text-anchor="middle">obj</text>
<circle cx="662.5" cy="565.5" r="2" fill="#a8a8a8"/>
<circle cx="662.5" cy="586.0" r="2" fill="#a8a8a8"/>
<rect x="1311.4" y="573.4" width="33.9" height="19.2" rx="2.5" fill="#1d2b43" stroke="#33425b" stroke-width="0.8"/>
<text x="1328.3" y="585.3" font-size="6" fill="#a3acba" text-anchor="middle">quant</text>
<circle cx="1328.3" cy="573.0" r="2" fill="#a8a8a8"/>
<circle cx="1328.3" cy="593.0" r="2" fill="#a8a8a8"/>
<rect x="788.8" y="581.1" width="34.4" height="19.2" rx="2.5" fill="#1d2b43" stroke="#33425b" stroke-width="0.8"/>
<text x="806.0" y="593.0" font-size="6" fill="#a3acba" text-anchor="middle">subj</text>
<circle cx="806.0" cy="580.7" r="2" fill="#a8a8a8"/>
<circle cx="806.0" cy="600.7" r="2" fill="#a8a8a8"/>
<rect x="864.4" y="581.1" width="34.7" height="19.2" rx="2.5" fill="#1d2b43" stroke="#33425b" stroke-width="0.8"/>
<text x="881.8" y="593.0" font-size="6" fill="#a3acba" text-anchor="middle">prop</text>
<circle cx="881.8" cy="580.7" r="2" fill="#a8a8a8"/>
<circle cx="881.8" cy="600.7" r="2" fill="#a8a8a8"/>
<rect x="993.1" y="588.4" width="34.5" height="19.2" rx="2.5" fill="#1d2b43" stroke="#33425b" stroke-width="0.8"/>
<text x="1010.4" y="600.3" font-size="6" fill="#a3acba" text-anchor="middle">subj</text>
<circle cx="1010.4" cy="588.0" r="2" fill="#a8a8a8"/>
<circle cx="1010.4" cy="608.0" r="2" fill="#a8a8a8"/>
<rect x="1342.0" y="596.1" width="29.6" height="19.5" rx="2.5" fill="#1d2b43" stroke="#33425b" stroke-width="0.8"/>
<text x="1356.8" y="608.1" font-size="6" fill="#a3acba" text-anchor="middle">units</text>
<circle cx="1356.8" cy="595.7" r="2" fill="#a8a8a8"/>
<circle cx="1356.8" cy="616.0" r="2" fill="#a8a8a8"/>
<rect x="1372.4" y="596.1" width="33.2" height="19.5" rx="2.5" fill="#1d2b43" stroke="#33425b" stroke-width="0.8"/>
<text x="1389.0" y="608.1" font-size="6" fill="#a3acba" text-anchor="middle">rel</text>
<circle cx="1389.0" cy="595.7" r="2" fill="#a8a8a8"/>
<circle cx="1389.0" cy="616.0" r="2" fill="#a8a8a8"/>
<rect x="1454.9" y="596.1" width="34.5" height="19.5" rx="2.5" fill="#1d2b43" stroke="#33425b" stroke-width="0.8"/>
<text x="1472.2" y="608.1" font-size="6" fill="#a3acba" text-anchor="middle">obj</text>
<circle cx="1472.2" cy="595.7" r="2" fill="#a8a8a8"/>
<circle cx="1472.2" cy="616.0" r="2" fill="#a8a8a8"/>
<rect x="471.1" y="619.4" width="34.5" height="18.8" rx="2.5" fill="#1d2b43" stroke="#33425b" stroke-width="0.8"/>
<text x="488.4" y="631.1" font-size="6" fill="#a3acba" text-anchor="middle">rel</text>
<circle cx="488.4" cy="619.0" r="2" fill="#a8a8a8"/>
<circle cx="488.4" cy="638.6" r="2" fill="#a8a8a8"/>
<rect x="600.2" y="619.4" width="33.9" height="18.8" rx="2.5" fill="#1d2b43" stroke="#33425b" stroke-width="0.8"/>
<text x="617.1" y="631.1" font-size="6" fill="#a3acba" text-anchor="middle">rel</text>
<circle cx="617.1" cy="619.0" r="2" fill="#a8a8a8"/>
<circle cx="617.1" cy="638.6" r="2" fill="#a8a8a8"/>
<rect x="743.4" y="619.4" width="34.2" height="18.8" rx="2.5" fill="#1d2b43" stroke="#33425b" stroke-width="0.8"/>
<text x="760.5" y="631.1" font-size="6" fill="#a3acba" text-anchor="middle">descr</text>
<circle cx="760.5" cy="619.0" r="2" fill="#a8a8a8"/>
<circle cx="760.5" cy="638.6" r="2" fill="#a8a8a8"/>
<rect x="1076.1" y="619.4" width="34.9" height="18.8" rx="2.5" fill="#1d2b43" stroke="#33425b" stroke-width="0.8"/>
<text x="1093.6" y="631.1" font-size="6" fill="#a3acba" text-anchor="middle">descr</text>
<circle cx="1093.6" cy="619.0" r="2" fill="#a8a8a8"/>
<circle cx="1093.6" cy="638.6" r="2" fill="#a8a8a8"/>
<rect x="1144.4" y="619.4" width="34.2" height="18.8" rx="2.5" fill="#1d2b43" stroke="#33425b" stroke-width="0.8"/>
<text x="1161.5" y="631.1" font-size="6" fill="#a3acba" text-anchor="middle">rel</text>
<circle cx="1161.5" cy="619.0" r="2" fill="#a8a8a8"/>
<circle cx="1161.5" cy="638.6" r="2" fill="#a8a8a8"/>
<rect x="1220.4" y="619.0" width="34.2" height="19.5" rx="2.5" fill="#1d2b43" stroke="#33425b" stroke-width="0.8"/>
<text x="1237.5" y="631.0" font-size="6" fill="#a3acba" text-anchor="middle">quant</text>
<circle cx="1237.5" cy="618.6" r="2" fill="#a8a8a8"/>
<circle cx="1237.5" cy="638.9" r="2" fill="#a8a8a8"/>
<rect x="1257.9" y="619.0" width="23.1" height="19.5" rx="2.5" fill="#1d2b43" stroke="#33425b" stroke-width="0.8"/>
<text x="1269.5" y="631.0" font-size="6" fill="#a3acba" text-anchor="middle">units</text>
<circle cx="1269.5" cy="618.6" r="2" fill="#a8a8a8"/>
<circle cx="1269.5" cy="638.9" r="2" fill="#a8a8a8"/>
<rect x="1280.4" y="619.0" width="35.2" height="19.5" rx="2.5" fill="#1d2b43" stroke="#33425b" stroke-width="0.8"/>
<text x="1298.0" y="631.0" font-size="6" fill="#a3acba" text-anchor="middle">log</text>
<circle cx="1298.0" cy="618.6" r="2" fill="#a8a8a8"/>
<circle cx="1298.0" cy="638.9" r="2" fill="#a8a8a8"/>
<rect x="569.4" y="634.4" width="34.2" height="19.2" rx="2.5" fill="#1d2b43" stroke="#33425b" stroke-width="0.8"/>
<text x="586.5" y="646.3" font-size="6" fill="#a3acba" text-anchor="middle">log</text>
<circle cx="586.5" cy="634.0" r="2" fill="#a8a8a8"/>
<circle cx="586.5" cy="654.0" r="2" fill="#a8a8a8"/>
<rect x="571.1" y="636.4" width="11.2" height="10.2" rx="2.5" fill="#1e2c45" stroke="#33425b" stroke-width="0.8"/>
<line x1="573.7" y1="642.5" x2="579.7" y2="642.5" stroke="#2f78b0" stroke-width="0.9"/>
<rect x="612.4" y="636.4" width="12.0" height="10.2" rx="2.5" fill="#1e2c45" stroke="#33425b" stroke-width="0.8"/>
<line x1="615.0" y1="642.5" x2="621.8" y2="642.5" stroke="#2f78b0" stroke-width="0.9"/>
<rect x="832.4" y="596.4" width="11.2" height="8.9" rx="2.5" fill="#1e2c45" stroke="#33425b" stroke-width="0.8"/>
<line x1="835.0" y1="601.9" x2="841.0" y2="601.9" stroke="#2f78b0" stroke-width="0.9"/>
<rect x="1093.1" y="524.9" width="11.5" height="8.3" rx="2.5" fill="#1e2c45" stroke="#33425b" stroke-width="0.8"/>
<line x1="1095.7" y1="530.0" x2="1102.0" y2="530.0" stroke="#2f78b0" stroke-width="0.9"/>
<rect x="1078.4" y="540.9" width="11.7" height="8.2" rx="2.5" fill="#1e2c45" stroke="#33425b" stroke-width="0.8"/>
<line x1="1081.0" y1="546.0" x2="1087.5" y2="546.0" stroke="#2f78b0" stroke-width="0.9"/>
<rect x="1092.4" y="593.1" width="12.2" height="10.1" rx="2.5" fill="#1e2c45" stroke="#33425b" stroke-width="0.8"/>
<line x1="1095.0" y1="599.2" x2="1102.0" y2="599.2" stroke="#2f78b0" stroke-width="0.9"/>
<rect x="1047.4" y="629.0" width="12.0" height="9.6" rx="2.5" fill="#1e2c45" stroke="#33425b" stroke-width="0.8"/>
<line x1="1050.0" y1="634.8" x2="1056.8" y2="634.8" stroke="#2f78b0" stroke-width="0.9"/>
<rect x="1187.9" y="619.9" width="11.7" height="9.7" rx="2.5" fill="#1e2c45" stroke="#33425b" stroke-width="0.8"/>
<line x1="1190.5" y1="625.8" x2="1197.0" y2="625.8" stroke="#2f78b0" stroke-width="0.9"/>
<rect x="1271.1" y="543.4" width="11.5" height="8.9" rx="2.5" fill="#1e2c45" stroke="#33425b" stroke-width="0.8"/>
<line x1="1273.7" y1="548.9" x2="1280.0" y2="548.9" stroke="#2f78b0" stroke-width="0.9"/>
<rect x="1256.1" y="560.4" width="12.4" height="9.2" rx="2.5" fill="#1e2c45" stroke="#33425b" stroke-width="0.8"/>
<line x1="1258.7" y1="566.0" x2="1265.9" y2="566.0" stroke="#2f78b0" stroke-width="0.9"/>
<rect x="1226.1" y="581.4" width="9.2" height="9.2" rx="2.5" fill="#1e2c45" stroke="#33425b" stroke-width="0.8"/>
<line x1="1228.7" y1="587.0" x2="1232.7" y2="587.0" stroke="#2f78b0" stroke-width="0.9"/>
<rect x="1236.1" y="581.4" width="9.2" height="9.2" rx="2.5" fill="#1e2c45" stroke="#33425b" stroke-width="0.8"/>
<line x1="1238.7" y1="587.0" x2="1242.7" y2="587.0" stroke="#2f78b0" stroke-width="0.9"/>
<rect x="1210.9" y="599.4" width="10.7" height="9.2" rx="2.5" fill="#1e2c45" stroke="#33425b" stroke-width="0.8"/>
<line x1="1213.5" y1="605.0" x2="1219.0" y2="605.0" stroke="#2f78b0" stroke-width="0.9"/>
<rect x="1331.4" y="606.4" width="11.2" height="9.2" rx="2.5" fill="#1e2c45" stroke="#33425b" stroke-width="0.8"/>
<line x1="1334.0" y1="612.0" x2="1340.0" y2="612.0" stroke="#2f78b0" stroke-width="0.9"/>
<rect x="1244.3" y="644.0" width="12.1" height="9.9" rx="2.5" fill="#1e2c45" stroke="#33425b" stroke-width="0.8"/>
<line x1="1246.9" y1="650.0" x2="1253.8" y2="650.0" stroke="#2f78b0" stroke-width="0.9"/>
<rect x="478.1" y="664.0" width="20.1" height="19.6" rx="2.5" fill="#1d2b43" stroke="#33425b" stroke-width="0.8"/>
<text x="488.1" y="676.1" font-size="6" fill="#a3acba" text-anchor="middle">На</text>
<circle cx="488.1" cy="663.6" r="2" fill="#a8a8a8"/>
<rect x="508.4" y="664.0" width="55.2" height="19.6" rx="2.5" fill="#1d2b43" stroke="#33425b" stroke-width="0.8"/>
<text x="536.0" y="676.1" font-size="6" fill="#a3acba" text-anchor="middle">лестницах</text>
<circle cx="536.0" cy="663.6" r="2" fill="#a8a8a8"/>
<rect x="576.4" y="664.0" width="15.2" height="19.6" rx="2.5" fill="#1d2b43" stroke="#33425b" stroke-width="0.8"/>
<text x="584.0" y="676.1" font-size="6" fill="#a3acba" text-anchor="middle">и</text>
<circle cx="584.0" cy="663.6" r="2" fill="#a8a8a8"/>
<rect x="599.4" y="664.0" width="14.7" height="19.6" rx="2.5" fill="#1d2b43" stroke="#33425b" stroke-width="0.8"/>
<text x="606.8" y="676.1" font-size="6" fill="#a3acba" text-anchor="middle">в</text>
<circle cx="606.8" cy="663.6" r="2" fill="#a8a8a8"/>
<rect x="622.2" y="664.0" width="54.9" height="19.6" rx="2.5" fill="#1d2b43" stroke="#33425b" stroke-width="0.8"/>
<text x="649.6" y="676.1" font-size="6" fill="#a3acba" text-anchor="middle">коридорах</text>
<circle cx="649.6" cy="663.6" r="2" fill="#a8a8a8"/>
<rect x="690.4" y="664.0" width="44.7" height="19.6" rx="2.5" fill="#1d2b43" stroke="#33425b" stroke-width="0.8"/>
<text x="712.8" y="676.1" font-size="6" fill="#a3acba" text-anchor="middle">следует</text>
<circle cx="712.8" cy="663.6" r="2" fill="#a8a8a8"/>
<rect x="743.4" y="664.0" width="85.1" height="19.6" rx="2.5" fill="#1d2b43" stroke="#33425b" stroke-width="0.8"/>
<text x="786.0" y="676.1" font-size="6" fill="#a3acba" text-anchor="middle">предусматривать</text>
<circle cx="786.0" cy="663.6" r="2" fill="#a8a8a8"/>
<rect x="841.4" y="664.0" width="60.7" height="19.6" rx="2.5" fill="#1d2b43" stroke="#33425b" stroke-width="0.8"/>
<text x="871.8" y="676.1" font-size="6" fill="#a3acba" text-anchor="middle">устройство</text>
<circle cx="871.8" cy="663.6" r="2" fill="#a8a8a8"/>
<rect x="909.4" y="664.0" width="45.9" height="19.6" rx="2.5" fill="#1d2b43" stroke="#33425b" stroke-width="0.8"/>
<text x="932.4" y="676.1" font-size="6" fill="#a3acba" text-anchor="middle">двойных</text>
<circle cx="932.4" cy="663.6" r="2" fill="#a8a8a8"/>
<rect x="978.4" y="664.0" width="49.2" height="19.6" rx="2.5" fill="#1d2b43" stroke="#33425b" stroke-width="0.8"/>
<text x="1003.0" y="676.1" font-size="6" fill="#a3acba" text-anchor="middle">поручней</text>
<circle cx="1003.0" cy="663.6" r="2" fill="#a8a8a8"/>
<rect x="1030.4" y="664.0" width="14.9" height="19.6" rx="2.5" fill="#1d2b43" stroke="#33425b" stroke-width="0.8"/>
<text x="1037.8" y="676.1" font-size="6" fill="#a3acba" text-anchor="middle">,</text>
<circle cx="1037.8" cy="663.6" r="2" fill="#a8a8a8"/>
<rect x="1053.4" y="664.0" width="85.1" height="19.6" rx="2.5" fill="#1d2b43" stroke="#33425b" stroke-width="0.8"/>
<text x="1096.0" y="676.1" font-size="6" fill="#a3acba" text-anchor="middle">располагающихся</text>
<circle cx="1096.0" cy="663.6" r="2" fill="#a8a8a8"/>
<rect x="1151.8" y="664.0" width="20.5" height="19.6" rx="2.5" fill="#1d2b43" stroke="#33425b" stroke-width="0.8"/>
<text x="1162.1" y="676.1" font-size="6" fill="#a3acba" text-anchor="middle">на</text>
<circle cx="1162.1" cy="663.6" r="2" fill="#a8a8a8"/>
<rect x="1182.2" y="664.0" width="39.7" height="19.6" rx="2.5" fill="#1d2b43" stroke="#33425b" stroke-width="0.8"/>
<text x="1202.0" y="676.1" font-size="6" fill="#a3acba" text-anchor="middle">высоте</text>
<circle cx="1202.0" cy="663.6" r="2" fill="#a8a8a8"/>
<rect x="1227.4" y="664.0" width="25.2" height="19.6" rx="2.5" fill="#1d2b43" stroke="#33425b" stroke-width="0.8"/>
<text x="1240.0" y="676.1" font-size="6" fill="#a3acba" text-anchor="middle">0,9</text>
<circle cx="1240.0" cy="663.6" r="2" fill="#a8a8a8"/>
<rect x="1265.2" y="664.0" width="15.1" height="19.6" rx="2.5" fill="#1d2b43" stroke="#33425b" stroke-width="0.8"/>
<text x="1272.8" y="676.1" font-size="6" fill="#a3acba" text-anchor="middle">м</text>
<circle cx="1272.8" cy="663.6" r="2" fill="#a8a8a8"/>
<rect x="1288.1" y="664.0" width="15.1" height="19.6" rx="2.5" fill="#1d2b43" stroke="#33425b" stroke-width="0.8"/>
<text x="1295.7" y="676.1" font-size="6" fill="#a3acba" text-anchor="middle">и</text>
<circle cx="1295.7" cy="663.6" r="2" fill="#a8a8a8"/>
<rect x="1318.1" y="664.0" width="24.9" height="19.6" rx="2.5" fill="#1d2b43" stroke="#33425b" stroke-width="0.8"/>
<text x="1330.6" y="676.1" font-size="6" fill="#a3acba" text-anchor="middle">0,7</text>
<circle cx="1330.6" cy="663.6" r="2" fill="#a8a8a8"/>
<rect x="1348.8" y="664.0" width="14.7" height="19.6" rx="2.5" fill="#1d2b43" stroke="#33425b" stroke-width="0.8"/>
<text x="1356.2" y="676.1" font-size="6" fill="#a3acba" text-anchor="middle">м</text>
<circle cx="1356.2" cy="663.6" r="2" fill="#a8a8a8"/>
<rect x="1378.4" y="664.0" width="20.2" height="19.6" rx="2.5" fill="#1d2b43" stroke="#33425b" stroke-width="0.8"/>
<text x="1388.5" y="676.1" font-size="6" fill="#a3acba" text-anchor="middle">от</text>
<circle cx="1388.5" cy="663.6" r="2" fill="#a8a8a8"/>
<rect x="1408.4" y="664.0" width="40.2" height="19.6" rx="2.5" fill="#1d2b43" stroke="#33425b" stroke-width="0.8"/>
<text x="1428.5" y="676.1" font-size="6" fill="#a3acba" text-anchor="middle">уровня</text>
<circle cx="1428.5" cy="663.6" r="2" fill="#a8a8a8"/>
<rect x="1454.4" y="664.0" width="30.0" height="19.6" rx="2.5" fill="#1d2b43" stroke="#33425b" stroke-width="0.8"/>
<text x="1469.4" y="676.1" font-size="6" fill="#a3acba" text-anchor="middle">пола</text>
<circle cx="1469.4" cy="663.6" r="2" fill="#a8a8a8"/>
<path d="M579.0,586.5 l-3,4.5 h6 z" fill="#2ba3e3"/>
<path d="M662.0,586.5 l-3,4.5 h6 z" fill="#2ba3e3"/>
<path d="M806.0,601.5 l-3,4.5 h6 z" fill="#2ba3e3"/>
<path d="M882.0,601.5 l-3,4.5 h6 z" fill="#2ba3e3"/>
<path d="M1237.0,480.0 l-3,4.5 h6 z" fill="#2ba3e3"/>
<path d="M1207.0,525.5 l-3,4.5 h6 z" fill="#2ba3e3"/>
<path d="M1161.0,578.5 l-3,4.5 h6 z" fill="#2ba3e3"/>
<path d="M1328.0,593.5 l-3,4.5 h6 z" fill="#2ba3e3"/>
<path d="M1237.0,639.5 l-3,4.5 h6 z" fill="#2ba3e3"/>
<path d="M972.0,570.5 l-3,4.5 h6 z" fill="#2ba3e3"/>
</svg><!--/GRAPH-->
  <!-- fab -->
  <div class="abs" style="left:1700px;top:471px;width:50px;height:50px;border-radius:50%;background:#1fa2df">
    <svg class="abs" style="left:13px;top:15px" width="24" height="22" viewBox="0 0 24 22"><path d="M2,5 H22 M2,15.8 H22" stroke="#14384e" stroke-width="1.6"/><circle cx="15.5" cy="5" r="2.7" fill="#1fa2df" stroke="#14384e" stroke-width="1.6"/><circle cx="8.5" cy="15.8" r="2.7" fill="#1fa2df" stroke="#14384e" stroke-width="1.6"/></svg>
  </div>
  <div class="abs" style="left:0;top:0;width:1760px;height:1px;background:#0b0c0e"></div>
  <div class="abs" style="left:0;top:991px;width:1760px;height:1px;background:#07080a"></div>
  <!-- scrollbar -->
  <div class="abs" style="left:1752px;top:84px;width:4px;height:889px;background:#46474b;border-radius:2px"></div>
</div>
</body></html>
